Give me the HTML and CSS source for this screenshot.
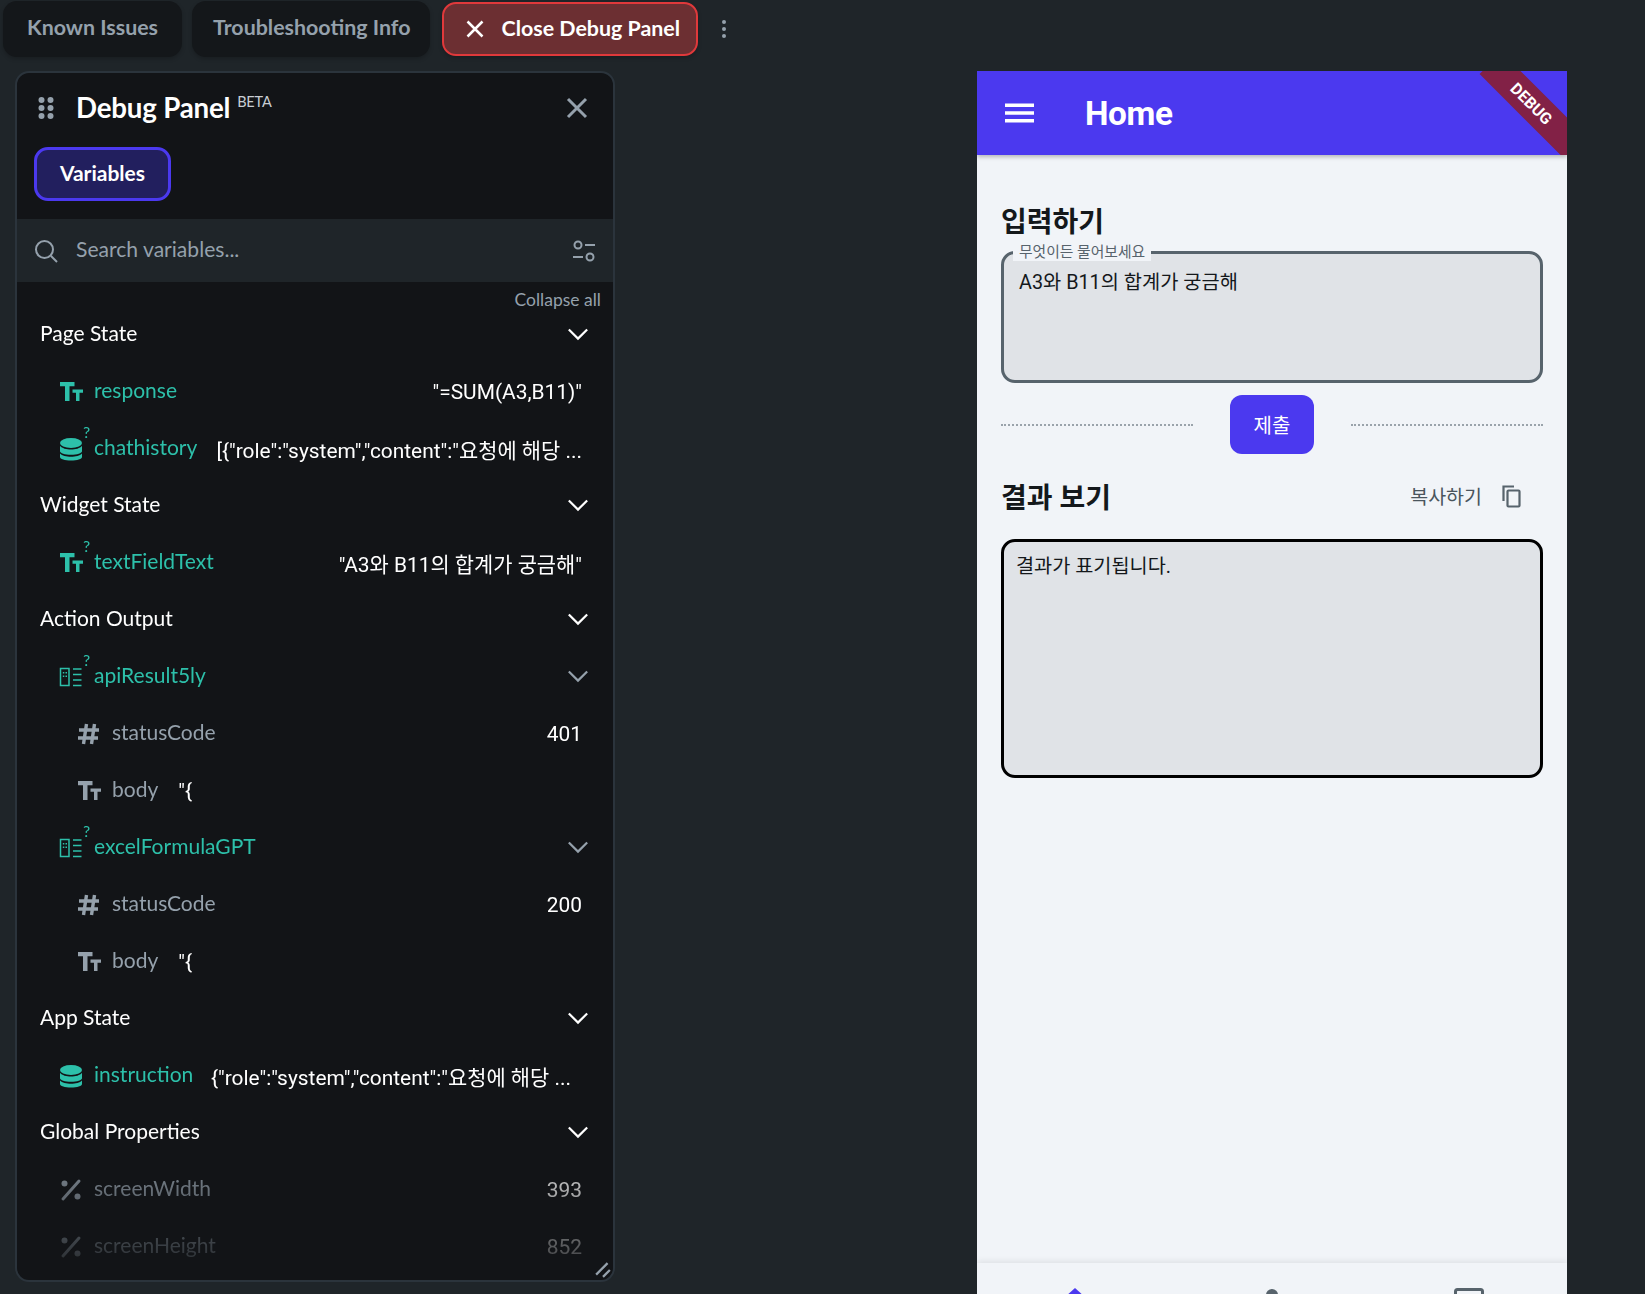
FILE: index.html
```html
<!DOCTYPE html>
<html lang="ko">
<head>
<meta charset="utf-8">
<title>Debug Panel</title>
<link rel="stylesheet" href="styles.css">
</head>
<body>
<svg class="defs" width="0" height="0" aria-hidden="true">
  <symbol id="i-tt" viewBox="0 0 24 24"><path d="M1 2h14.500v4.200h-5V21H6V6.200H1zM13.500 9.500H24v3.300h-3.500V21h-3.500v-8.200h-3.500z"/></symbol>
  <symbol id="i-db" viewBox="0 0 24 24"><ellipse cx="12" cy="6" rx="11" ry="5"/><path d="M1 8.800c2 2.600 6.500 3.800 11 3.800s9-1.200 11-3.800v5.400c0 1.900-4.900 3.600-11 3.600S1 16.100 1 14.200z" /><path d="M1 16.400c2 2.300 6.500 3.300 11 3.300s9-1 11-3.300V20c0 2-4.900 3.500-11 3.500S1 22 1 20z"/></symbol>
  <symbol id="i-api" viewBox="0 0 24 24"><path fill="none" stroke="currentColor" stroke-width="1.500" d="M1.500 3.500h8.500v17H1.500zM14 4h8.500M14 9.500h8.500M14 15h8.500M14 20.500h8.500"/><path d="M3.800 7h1.500v1.500H3.800zM6.500 7H8v1.500H6.500zM3.800 10.500h1.500V12H3.800zM6.500 10.500H8V12H6.500z"/></symbol>
  <symbol id="i-hash" viewBox="0 0 24 24"><path fill="none" stroke="currentColor" stroke-width="3.400" d="M9.500 2 6.500 22M17.500 2l-3 20M2 8h20M1 16h20"/></symbol>
  <symbol id="i-pct" viewBox="0 0 24 24"><path fill="none" stroke="currentColor" stroke-width="3" stroke-linecap="round" d="M20 3 4 21"/><circle cx="5.500" cy="5.500" r="3"/><circle cx="18.500" cy="18.500" r="3"/></symbol>
  <symbol id="i-chev" viewBox="0 0 24 24"><path fill="none" stroke="currentColor" stroke-width="2.400" d="m2 7 10 10L22 7"/></symbol>
</svg>

<nav class="tabs">
  <button class="tab">Known Issues</button>
  <button class="tab tab-info">Troubleshooting Info</button>
  <button class="tab tab-close">
    <svg class="tab-x" viewBox="0 0 24 24"><path d="M3 3l18 18M21 3 3 21"/></svg>
    Close Debug Panel
  </button>
  <svg class="kebab" viewBox="0 0 6 20"><circle cx="3" cy="3" r="2"/><circle cx="3" cy="10" r="2"/><circle cx="3" cy="17" r="2"/></svg>
</nav>

<main class="stage">
  <section class="panel">
    <header class="panel-head">
      <svg class="grip" viewBox="0 0 16 24"><circle cx="3.500" cy="4" r="3"/><circle cx="12.500" cy="4" r="3"/><circle cx="3.500" cy="12" r="3"/><circle cx="12.500" cy="12" r="3"/><circle cx="3.500" cy="20" r="3"/><circle cx="12.500" cy="20" r="3"/></svg>
      <h1 class="panel-title">Debug Panel<sup class="beta">BETA</sup></h1>
      <svg class="panel-x" viewBox="0 0 24 24"><path d="M3 3l18 18M21 3 3 21"/></svg>
    </header>
    <div class="panel-tabs"><button class="var-tab">Variables</button></div>
    <div class="search">
      <svg class="search-ico" viewBox="0 0 24 24"><circle cx="10.500" cy="10.500" r="8.500"/><path d="m17 17 6 6"/></svg>
      <span class="search-text">Search variables...</span>
      <svg class="filter-ico" viewBox="0 0 24 24"><circle cx="6" cy="6" r="3.500"/><path d="M13 6h10M1 18h10"/><circle cx="18" cy="18" r="3.500"/></svg>
    </div>
    <div class="collapse-row">Collapse all</div>
    <div class="list">
      <div class="section"><span>Page State</span><svg class="chev"><use href="#i-chev"/></svg></div>
      <div class="row teal"><span class="ico"><svg><use href="#i-tt"/></svg></span><span class="name">response</span><span class="val">"=SUM(A3,B11)"</span></div>
      <div class="row teal"><span class="ico"><svg><use href="#i-db"/></svg><i class="opt">?</i></span><span class="name">chathistory</span><span class="val">[{"role":"system","content":"요청에 해당 ...</span></div>
      <div class="section"><span>Widget State</span><svg class="chev"><use href="#i-chev"/></svg></div>
      <div class="row teal"><span class="ico"><svg><use href="#i-tt"/></svg><i class="opt">?</i></span><span class="name">textFieldText</span><span class="val">"A3와 B11의 합계가 궁금해"</span></div>
      <div class="section"><span>Action Output</span><svg class="chev"><use href="#i-chev"/></svg></div>
      <div class="row teal"><span class="ico"><svg><use href="#i-api"/></svg><i class="opt">?</i></span><span class="name">apiResult5ly</span><svg class="chev chev-sub"><use href="#i-chev"/></svg></div>
      <div class="row sub"><span class="ico"><svg><use href="#i-hash"/></svg></span><span class="name">statusCode</span><span class="val">401</span></div>
      <div class="row sub"><span class="ico"><svg><use href="#i-tt"/></svg></span><span class="name">body</span><span class="val val-left">"{</span></div>
      <div class="row teal"><span class="ico"><svg><use href="#i-api"/></svg><i class="opt">?</i></span><span class="name">excelFormulaGPT</span><svg class="chev chev-sub"><use href="#i-chev"/></svg></div>
      <div class="row sub"><span class="ico"><svg><use href="#i-hash"/></svg></span><span class="name">statusCode</span><span class="val">200</span></div>
      <div class="row sub"><span class="ico"><svg><use href="#i-tt"/></svg></span><span class="name">body</span><span class="val val-left">"{</span></div>
      <div class="section"><span>App State</span><svg class="chev"><use href="#i-chev"/></svg></div>
      <div class="row teal"><span class="ico"><svg><use href="#i-db"/></svg></span><span class="name">instruction</span><span class="val val-inset">{"role":"system","content":"요청에 해당 ...</span></div>
      <div class="section"><span>Global Properties</span><svg class="chev"><use href="#i-chev"/></svg></div>
      <div class="row grey"><span class="ico"><svg><use href="#i-pct"/></svg></span><span class="name">screenWidth</span><span class="val">393</span></div>
      <div class="row grey"><span class="ico"><svg><use href="#i-pct"/></svg></span><span class="name">screenHeight</span><span class="val">852</span></div>
    </div>
    <svg class="resize" viewBox="0 0 14 14"><path d="M1 11 11 1M7 13l6-6"/></svg>
  </section>

  <section class="phone">
    <header class="app-bar">
      <svg class="menu" viewBox="0 0 30 20"><path d="M0 2h30M0 10h30M0 18h30"/></svg>
      <h2 class="app-title">Home</h2>
      <div class="ribbon">DEBUG</div>
    </header>
    <div class="content">
      <h3 class="heading heading-in">입력하기</h3>
      <div class="field">
        <span class="field-label">무엇이든 물어보세요</span>
        <span class="field-value">A3와 B11의 합계가 궁금해</span>
      </div>
      <div class="submit-row">
        <span class="dots"></span>
        <button class="submit">제출</button>
        <span class="dots"></span>
      </div>
      <div class="result-head">
        <h3 class="heading heading-out">결과 보기</h3>
        <span class="copy">복사하기</span>
        <svg class="copy-ico" viewBox="0 0 24 24"><path d="M4.500 17V2.500H15"/><rect x="8.500" y="6.500" width="12" height="16" rx="1"/></svg>
      </div>
      <div class="result">결과가 표기됩니다.</div>
    </div>
    <footer class="bottom-nav">
      <svg class="nav-home" viewBox="0 0 20 20"><path d="M10 0 0 9h20z"/></svg>
      <svg class="nav-person" viewBox="0 0 20 20"><circle cx="10" cy="7" r="6"/></svg>
      <svg class="nav-box" viewBox="0 0 30 20"><rect x="1.500" y="1.500" width="27" height="20" rx="2"/></svg>
    </footer>
  </section>
</main>
</body>
</html>
```

FILE: styles.css
```css
* { box-sizing: border-box; }
html, body { margin: 0; height: 1294px; overflow: hidden; }
body {
  background: #1f2529;
  font-family: "Lato", "Noto Sans CJK KR", sans-serif;
  color: #fff;
  display: flex;
  flex-direction: column;
}
button { font: inherit; border: 0; cursor: pointer; }
.defs { position: absolute; }
.tabs {
  height: 71px;
  flex: none;
  padding: 1px 0 0 3px;
  display: flex;
  align-items: flex-start;
  gap: 10px;
}
.tab {
  height: 56px;
  padding: 0 24px 4px;
  border-radius: 14px;
  background: #14171a;
  color: #95a1ac;
  font-size: 21.400px;
  font-weight: 700;
  box-shadow: 0 2px 4px rgba(0,0,0,.2);
}
.tab-info { padding: 0 20px 4px 21px; }
.tab-close {
  margin-left: 2px;
  background: #6c2f32;
  border: 2px solid #e0393b;
  color: #fff;
  display: flex;
  align-items: center;
  gap: 16px;
  padding: 0 16px 3px 21px;
  height: 54px;
  margin-top: 1px;
}
.tab-x { width: 20px; height: 20px; fill: none; stroke: #fff; stroke-width: 3; margin-top: 3px; }
.kebab { width: 6px; height: 20px; margin: 18px 0 0 13px; fill: #95a1ac; }
.stage {
  flex: 1;
  display: flex;
  justify-content: space-between;
  padding: 0 78px 0 15px;
  min-height: 0;
}
.panel {
  position: relative;
  width: 600px;
  height: 1211px;
  background: #121417;
  border: 2px solid #2b343c;
  border-radius: 14px;
  overflow: hidden;
  display: flex;
  flex-direction: column;
}
.panel-head {
  height: 69px;
  flex: none;
  display: flex;
  align-items: center;
  padding: 0 24px 0 21px;
}
.grip { width: 16px; height: 24px; fill: #95a1ac; }
.panel-title { margin: 0 0 0 22px; font-size: 27.700px; font-weight: 700; flex: 1; letter-spacing: -.2px; }
.beta { font-size: 14.500px; font-weight: 400; color: #c8ced3; margin-left: 7px; vertical-align: 11px; line-height: 0; }
.panel-x { width: 24px; height: 24px; fill: none; stroke: #95a1ac; stroke-width: 3; }
.panel-tabs { height: 77px; flex: none; padding: 5px 0 0 17px; }
.var-tab {
  width: 137px;
  height: 54px;
  border: 3px solid #4b39ef;
  border-radius: 14px;
  background: #221f5e;
  color: #fff;
  font-size: 21px;
  font-weight: 700;
  padding-bottom: 5px;
}
.search {
  height: 63px;
  flex: none;
  background: #1f2529;
  display: flex;
  align-items: center;
  padding: 0 17px;
}
.search-ico { width: 24px; height: 24px; fill: none; stroke: #95a1ac; stroke-width: 2; }
.search-text { flex: 1; margin-left: 18px; padding-bottom: 4px; font-size: 21.100px; color: #95a1ac; }
.filter-ico { width: 24px; height: 24px; fill: none; stroke: #95a1ac; stroke-width: 2; }
.collapse-row { height: 22px; flex: none; text-align: right; padding-right: 12px; font-size: 17.500px; line-height: 36px; color: #95a1ac; }
.list {
  flex: 1;
  -webkit-mask-image: linear-gradient(to bottom, #000 830px, transparent 990px);
  mask-image: linear-gradient(to bottom, #000 830px, transparent 990px);
}
.section, .row { height: 57px; display: flex; align-items: center; }
.section { padding: 0 24px 0 23px; font-size: 21px; justify-content: space-between; }
.chev { width: 22px; height: 22px; color: #fff; position: relative; top: 1px; }
.chev-sub { color: #95a1ac; margin-left: auto; margin-right: -7px; }
.row { padding: 0 31px 0 42px; font-size: 21px; }
.row.sub { padding-left: 60px; color: #95a1ac; }
.row.teal { color: #2dc0aa; }
.row.grey { color: #95a1ac; }
.ico { position: relative; width: 24px; height: 24px; flex: none; margin-right: 11px; }
.ico svg { width: 24px; height: 24px; fill: currentColor; display: block; margin-top: 2px; }
.opt { position: absolute; left: 24px; top: -13px; font-size: 16px; font-style: normal; }
.val {
  margin-left: auto;
  color: #fff;
  font-family: "Roboto", "Noto Sans CJK KR", sans-serif;
  font-size: 20.900px;
  position: relative;
  top: 2px;
  white-space: nowrap;
}
.val-left { margin-left: 20px; }
.val-inset { margin-right: 11px; }
.resize { position: absolute; right: 2px; bottom: 2px; width: 16px; height: 16px; fill: none; stroke: #95a1ac; stroke-width: 2; }

.phone {
  width: 590px;
  background: #f1f4f8;
  color: #14181b;
  display: flex;
  flex-direction: column;
  height: 1223px;
  font-family: "Roboto", "Noto Sans CJK KR", sans-serif;
  overflow: hidden;
}
.app-bar {
  position: relative;
  height: 84px;
  flex: none;
  background: #4b39ef;
  display: flex;
  align-items: center;
  padding-left: 28px;
  box-shadow: 0 2px 4px rgba(0,0,0,.25);
  overflow: hidden;
}
.menu { width: 29px; height: 20px; fill: none; stroke: #fff; stroke-width: 3.500; }
.app-title { margin: 0 0 0 51px; font-size: 33.300px; font-weight: 700; color: #fff; letter-spacing: -.4px; }
.ribbon {
  position: absolute;
  left: 496px;
  top: 19px;
  width: 120px;
  height: 31px;
  line-height: 31px;
  text-align: center;
  padding-right: 5px;
  transform: rotate(45deg);
  background: #822146;
  color: #fff;
  font-size: 16px;
  font-weight: 700;
}
.content { flex: 1; padding: 48px 24px 0; display: flex; flex-direction: column; }
.heading { margin: 0; font-size: 28px; font-weight: 700; line-height: 40px; color: #14181b; }
.field {
  position: relative;
  height: 132px;
  margin-top: 8px;
  background: #e0e3e7;
  border: 3px solid #57636c;
  border-radius: 14px;
  padding: 12px 15px;
  font-size: 19.800px;
}
.field-label {
  position: absolute;
  left: 9px;
  top: -11px;
  padding: 0 6px;
  height: 18px;
  line-height: 18px;
  background: #f1f4f8;
  font-size: 14.800px;
  color: #57636c;
}
.submit-row { margin-top: 12px; height: 59px; display: flex; align-items: center; justify-content: space-between; }
.dots { width: 192px; border-top: 2px dotted #9aa3ab; }
.submit { width: 84px; height: 59px; border-radius: 12px; background: #4b39ef; color: #fff; font-size: 20px; font-family: inherit; }
.result-head { margin-top: 24px; height: 42px; display: flex; align-items: center; }
.heading-out { flex: 1; }
.copy { font-size: 19.500px; color: #4a555d; padding-bottom: 8px; }
.copy-ico { width: 24px; height: 24px; fill: none; stroke: #57636c; stroke-width: 2.200; margin: 0 20px 6px 17px; }
.result {
  margin-top: 19px;
  height: 239px;
  background: #e0e3e7;
  border: 3px solid #000;
  border-radius: 14px;
  padding: 8px 12px;
  font-size: 19.700px;
  color: #14181b;
}
.bottom-nav {
  height: 31px;
  flex: none;
  background: #f1f4f8;
  box-shadow: 0 -2px 6px rgba(0,0,0,.08);
  display: grid;
  grid-template-columns: repeat(3, 1fr);
  justify-items: center;
  padding: 25px 0 0;
  overflow: hidden;
  position: relative;
  z-index: 1;
  margin-top: auto;
}
.nav-home { width: 20px; height: 20px; fill: #4b39ef; }
.nav-person { width: 20px; height: 20px; fill: #57636c; }
.nav-box { width: 30px; height: 20px; fill: none; stroke: #57636c; stroke-width: 3; }
```
